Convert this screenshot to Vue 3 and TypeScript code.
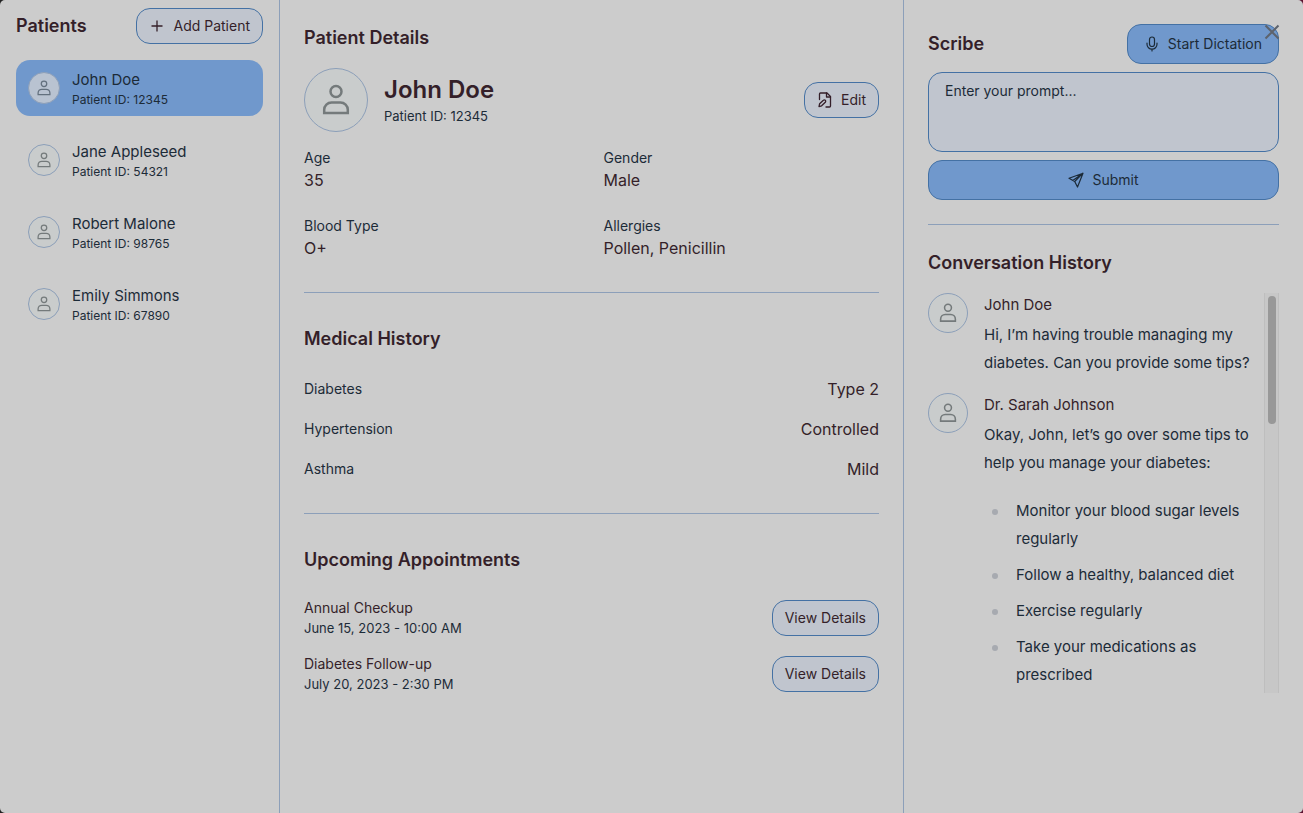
<script setup lang="ts">
import { defineComponent, h, ref } from 'vue'

interface Patient { name: string; id: string }
interface Message { author: string; text: string; tips?: string[] }

const patients: Patient[] = [
  { name: 'John Doe', id: '12345' },
  { name: 'Jane Appleseed', id: '54321' },
  { name: 'Robert Malone', id: '98765' },
  { name: 'Emily Simmons', id: '67890' },
]
const selected = ref('12345')
const prompt = ref('')

const details = [
  { label: 'Age', value: '35' },
  { label: 'Gender', value: 'Male' },
  { label: 'Blood Type', value: 'O+' },
  { label: 'Allergies', value: 'Pollen, Penicillin' },
]
const conditions = [
  { label: 'Diabetes', value: 'Type 2' },
  { label: 'Hypertension', value: 'Controlled' },
  { label: 'Asthma', value: 'Mild' },
]
const appointments = [
  { title: 'Annual Checkup', time: 'June 15, 2023 - 10:00 AM' },
  { title: 'Diabetes Follow-up', time: 'July 20, 2023 - 2:30 PM' },
]
const messages: Message[] = [
  { author: 'John Doe', text: 'Hi, I’m having trouble managing my diabetes. Can you provide some tips?' },
  {
    author: 'Dr. Sarah Johnson',
    text: 'Okay, John, let’s go over some tips to help you manage your diabetes:',
    tips: [
      'Monitor your blood sugar levels regularly',
      'Follow a healthy, balanced diet',
      'Exercise regularly',
      'Take your medications as prescribed',
    ],
  },
]

const UserIcon = defineComponent({
  render: () =>
    h('svg', { viewBox: '0 0 32 32', fill: 'none', stroke: 'currentColor', 'stroke-width': '2.5', 'aria-hidden': 'true' }, [
      h('circle', { cx: 16, cy: 7.6, r: 5.5 }),
      h('path', { d: 'M4.2 29v-3.2c0-4.1 3.3-7.3 7.4-7.3h8.8c4.1 0 7.4 3.2 7.4 7.3V29z' }),
    ]),
})
</script>

<template>
  <div class="app">
    <aside class="sidebar">
      <div class="bar">
        <h2>Patients</h2>
        <button type="button" class="btn">
          <svg width="16" height="16" viewBox="0 0 16 16" fill="none" stroke="currentColor" stroke-width="1.3" aria-hidden="true">
            <path d="M8 2.5v11M2.5 8h11" />
          </svg>
          Add Patient
        </button>
      </div>
      <nav class="patients">
        <button
          v-for="p in patients"
          :key="p.id"
          type="button"
          class="patient"
          :class="{ active: p.id === selected }"
          @click="selected = p.id"
        >
          <span class="avatar small"><UserIcon /></span>
          <span class="patient-text">
            <span class="patient-name">{{ p.name }}</span>
            <span class="patient-id">Patient ID: {{ p.id }}</span>
          </span>
        </button>
      </nav>
    </aside>

    <main class="main">
      <section>
        <h2>Patient Details</h2>
        <div class="profile">
          <span class="avatar large"><UserIcon /></span>
          <div class="who">
            <h1>John Doe</h1>
            <p>Patient ID: 12345</p>
          </div>
          <button type="button" class="btn">
            <svg width="16" height="16" viewBox="0 0 16 16" fill="none" stroke="currentColor" stroke-width="1.3" stroke-linecap="round" stroke-linejoin="round" aria-hidden="true">
              <path d="M2.5 7.5V2a1 1 0 0 1 1-1H10l3.5 3.5V14a1 1 0 0 1-1 1H9" />
              <path d="M9.5 1v4h4" />
              <path d="M2.6 11.8l3.8-3.5a1.3 1.3 0 0 1 1.9 1.9l-3.7 3.6-2.6.8z" />
            </svg>
            Edit
          </button>
        </div>
        <dl class="facts">
          <div v-for="d in details" :key="d.label">
            <dt>{{ d.label }}</dt>
            <dd>{{ d.value }}</dd>
          </div>
        </dl>
      </section>
      <hr />
      <section>
        <h2>Medical History</h2>
        <dl class="conditions">
          <div v-for="c in conditions" :key="c.label">
            <dt>{{ c.label }}</dt>
            <dd>{{ c.value }}</dd>
          </div>
        </dl>
      </section>
      <hr />
      <section>
        <h2>Upcoming Appointments</h2>
        <ul class="appointments">
          <li v-for="a in appointments" :key="a.title">
            <div>
              <h3>{{ a.title }}</h3>
              <p>{{ a.time }}</p>
            </div>
            <button type="button" class="btn">View Details</button>
          </li>
        </ul>
      </section>
    </main>

    <aside class="scribe">
      <div class="bar">
        <h2><label for="prompt">Scribe</label></h2>
        <button type="button" class="btn primary">
          <svg width="16" height="16" viewBox="0 0 16 16" fill="none" stroke="currentColor" stroke-width="1.2" stroke-linecap="round" aria-hidden="true">
            <rect x="5.5" y="1" width="5" height="9.5" rx="2.5" />
            <path d="M3 7v1.2a5 5 0 0 0 10 0V7M8 13.2V15" />
          </svg>
          Start Dictation
        </button>
      </div>
      <textarea id="prompt" v-model="prompt" placeholder="Enter your prompt..."></textarea>
      <button type="button" class="btn primary">
        <svg width="16" height="16" viewBox="0 0 16 16" fill="none" stroke="currentColor" stroke-width="1.2" stroke-linejoin="round" aria-hidden="true">
          <path d="M15 1.2L1 6.3l5.7 3.2L9.5 15zM15 1.2L4.8 8.4M15 1.2L6.7 9.5" />
        </svg>
        Submit
      </button>
      <hr />
      <h2>Conversation History</h2>
      <div class="history">
        <div class="messages">
          <article v-for="m in messages" :key="m.author" class="message">
            <span class="avatar medium"><UserIcon /></span>
            <div class="body">
              <h3>{{ m.author }}</h3>
              <p>{{ m.text }}</p>
              <ul v-if="m.tips">
                <li v-for="t in m.tips" :key="t">{{ t }}</li>
              </ul>
            </div>
          </article>
        </div>
        <div class="track" aria-hidden="true"><div class="thumb"></div></div>
      </div>
    </aside>

    <button type="button" class="close" aria-label="Close">
      <svg width="16" height="16" viewBox="0 0 16 16" fill="none" stroke="currentColor" stroke-width="2" aria-hidden="true">
        <path d="M1.5 1.5l13 13M14.5 1.5l-13 13" />
      </svg>
    </button>
  </div>
</template>

<style>
body {
  margin: 0;
  background: linear-gradient(90deg, #222222, #5c1230);
}
</style>

<style scoped>
* {
  box-sizing: border-box;
}
.app {
  --ink: #1c2b38;
  --plum: #341f29;
  --line: #8c9fb9;
  --edge: #4471a4;
  --soft: #c0c5ce;
  --blue: #7098cc;
  position: relative;
  display: grid;
  grid-template-columns: 280px minmax(0, 1fr) 400px;
  min-height: 100vh;
  border-radius: 5px;
  background: #cccccc;
  color: var(--ink);
  font-family: Inter, "Noto Sans", sans-serif;
  font-size: 14px;
  line-height: 20px;
}
h1, h2, h3, p, ul, dl, dd {
  margin: 0;
  padding: 0;
}
h1, h2, h3, dd {
  color: var(--plum);
}
h1 {
  font-size: 24px;
  line-height: 32px;
  font-weight: 600;
}
h2 {
  font-size: 18px;
  line-height: 28px;
  font-weight: 600;
}
ul {
  list-style: none;
}
hr {
  width: 100%;
  height: 1px;
  margin: 32px 0;
  border: 0;
  background: var(--line);
}
.bar {
  display: flex;
  align-items: center;
  justify-content: space-between;
}
.btn {
  display: inline-flex;
  align-items: center;
  justify-content: center;
  gap: 8px;
  height: 36px;
  padding: 0 12px;
  border: 1px solid var(--edge);
  border-radius: 14px;
  background: var(--soft);
  color: var(--plum);
  font: inherit;
  cursor: pointer;
}
.primary {
  height: 40px;
  padding: 0 16px;
  background: var(--blue);
  color: var(--ink);
}
.avatar {
  display: flex;
  flex: none;
  align-items: center;
  justify-content: center;
  border: 1px solid var(--line);
  border-radius: 50%;
  background: #c9cccc;
  color: #747a7b;
}
.small {
  width: 32px;
  height: 32px;
}
.small svg {
  width: 16px;
  height: 16px;
}
.medium {
  width: 40px;
  height: 40px;
}
.medium svg {
  width: 20px;
  height: 20px;
}
.large {
  width: 64px;
  height: 64px;
}
.large svg {
  width: 32px;
  height: 32px;
}
.sidebar {
  padding: 8px 16px;
  border-right: 1px solid var(--line);
}
.patients {
  display: flex;
  flex-direction: column;
  gap: 16px;
  margin-top: 16px;
}
.patient {
  display: flex;
  align-items: center;
  gap: 12px;
  min-height: 56px;
  padding: 8px 12px;
  border: 0;
  border-radius: 14px;
  background: none;
  color: var(--ink);
  font: inherit;
  text-align: left;
  cursor: pointer;
}
.patient.active {
  background: var(--blue);
}
.active .avatar {
  background: #b9c3d1;
  color: #63707e;
}
.patient-text {
  display: flex;
  flex-direction: column;
}
.patient-name {
  font-size: 15px;
  line-height: 24px;
}
.patient-id {
  font-size: 12px;
  line-height: 16px;
}
.main {
  padding: 24px;
}
.profile {
  display: flex;
  align-items: center;
  gap: 16px;
  margin: 16px 0;
}
.who {
  flex: 1;
}
.who p,
.appointments p {
  font-size: 13px;
}
.facts {
  display: grid;
  grid-template-columns: 1fr 1fr;
  gap: 24px;
}
dd {
  font-size: 16px;
  line-height: 24px;
}
.conditions {
  display: flex;
  flex-direction: column;
  gap: 16px;
  margin-top: 24px;
}
.conditions > div {
  display: flex;
  align-items: center;
  justify-content: space-between;
}
.appointments {
  display: flex;
  flex-direction: column;
  gap: 16px;
  margin-top: 24px;
}
.appointments li {
  display: flex;
  align-items: center;
  justify-content: space-between;
}
h3 {
  font-size: 14px;
  line-height: 20px;
  font-weight: 400;
}
.scribe {
  display: flex;
  flex-direction: column;
  padding: 24px;
  border-left: 1px solid var(--line);
}
.scribe hr {
  margin: 24px 0;
}
textarea {
  display: block;
  width: 100%;
  height: 80px;
  margin: 8px 0;
  padding: 8px 16px;
  border: 1px solid var(--edge);
  border-radius: 14px;
  outline: 0;
  resize: none;
  background: var(--soft);
  color: var(--ink);
  font: inherit;
}
textarea::placeholder {
  color: var(--ink);
  opacity: 1;
}
.history {
  display: flex;
  height: 400px;
  margin-top: 16px;
}
.messages {
  display: flex;
  flex: 1;
  flex-direction: column;
  gap: 16px;
  min-width: 0;
  overflow-y: auto;
  scrollbar-width: none;
}
.message {
  display: flex;
  gap: 16px;
}
.body {
  flex: 1;
  min-width: 0;
  font-size: 15px;
  line-height: 28px;
}
.body h3 {
  margin-bottom: 4px;
  font-size: 15px;
  line-height: 24px;
}
.body ul {
  display: flex;
  flex-direction: column;
  gap: 8px;
  margin-top: 20px;
}
.body li {
  display: flex;
  gap: 18px;
  padding-left: 8px;
}
.body li::before {
  content: "";
  flex: none;
  width: 6px;
  height: 6px;
  margin-top: 12px;
  border-radius: 50%;
  background: #a7aab0;
}
.track {
  width: 15px;
  padding: 3px;
  border: 1px solid #bebebe;
  border-width: 0 1px;
  background: #c7c7c7;
}
.thumb {
  width: 8px;
  height: 128px;
  border-radius: 4px;
  background: #989898;
}
.close {
  position: absolute;
  top: 24px;
  right: 23px;
  display: flex;
  padding: 0;
  border: 0;
  background: none;
  color: #5d636d;
  cursor: pointer;
}
</style>
